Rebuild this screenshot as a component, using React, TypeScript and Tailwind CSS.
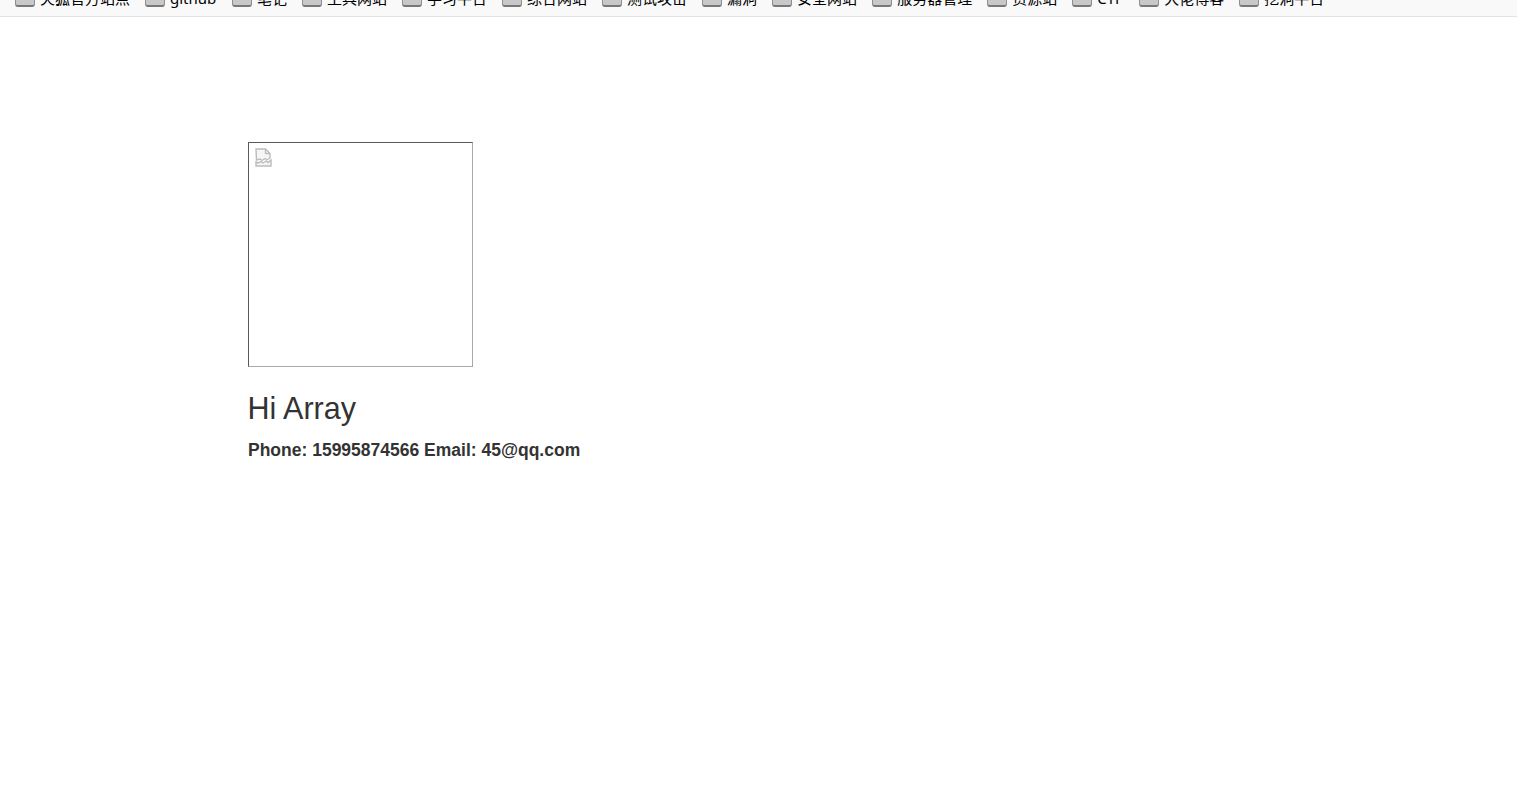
const items: { label: string; width?: string }[] = [
  { label: "火狐官方站点" },
  { label: "github", width: "w-[47px]" },
  { label: "笔记" },
  { label: "工具网站" },
  { label: "学习平台" },
  { label: "综合网站" },
  { label: "测试攻击" },
  { label: "漏洞" },
  { label: "安全网站" },
  { label: "服务器管理" },
  { label: "资源站" },
  { label: "CTF", width: "w-[27px]" },
  { label: "大佬博客" },
  { label: "挖洞平台" },
];

function Folder() {
  return (
    <span className="block w-5 h-[22px] shrink-0 rounded-[3px] bg-[#c8c8c8] border border-[#8f8f8f] border-b-2 border-b-[#777777]" />
  );
}

export default function App() {
  return (
    <div className="min-h-[796px] bg-white font-['Liberation_Sans','Noto_Sans_CJK_SC',sans-serif] text-[#333333]">
      <div className="h-[17px] overflow-hidden bg-[#f9f9f9] border-b border-[#e2e2e2]">
        <div className="flex items-center gap-[15px] pl-[15px] -mt-[15px] h-[22px] text-[15px] leading-[22px] text-black whitespace-nowrap font-['Noto_Sans','Noto_Sans_CJK_SC',sans-serif]">
          {items.map(({ label, width }) => (
            <div key={label} className="flex items-center gap-[5px]">
              <Folder />
              <span className={`pt-[3px] ${width ?? ""}`}>{label}</span>
            </div>
          ))}
        </div>
      </div>
      <div className="pl-[248px] pt-[125px]">
        <div className="w-[225px] h-[225px] border border-t-[#5a5a5a] border-l-[#5a5a5a] border-r-[#a9a9a9] border-b-[#a9a9a9] pl-[6px] pt-[5px]">
          <svg width="17" height="19" viewBox="0 0 17 19" fill="none" stroke="#bcbcbc" strokeWidth="1.4">
            <path d="M1 1h9.500l4.500 4.500V10l-3 2-2-1.500-3 2-2-1.500-3.500 1z" fill="#f6f6f6" />
            <path d="M10.500 1v4.500H15" />
            <path d="M1 14v4h15v-6l-3 2.500-2-1.500-3 2-2-1.500-3 1.500z" fill="#f6f6f6" />
          </svg>
        </div>
        <h2 className="mt-[25px] -ml-[0.5px] text-[30.5px] leading-[33px] font-normal">Hi Array</h2>
        <p className="mt-[12px] text-[17.5px] leading-[26px] font-bold">Phone: 15995874566 Email: 45@qq.com</p>
      </div>
    </div>
  );
}
